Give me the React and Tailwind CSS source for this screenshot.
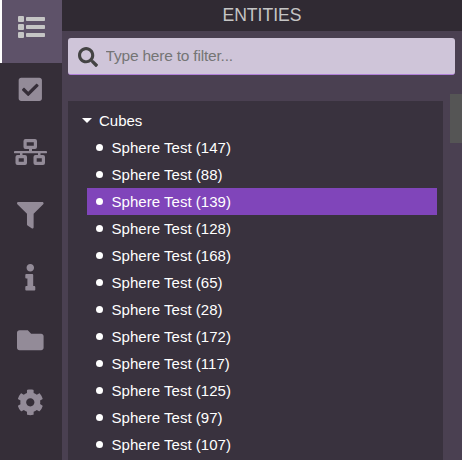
import {
  FaCheckSquare,
  FaFilter,
  FaInfo,
  FaFolder,
  FaCog,
  FaSearch,
} from "react-icons/fa";

const entities = [147, 88, 139, 128, 168, 65, 28, 172, 117, 125, 97, 107];
const selected = 139;

function ListIcon() {
  return (
    <svg viewBox="0 0 27 22" className="h-[22px] w-[27px]" fill="currentColor">
      {[0, 8, 16].map((y) => (
        <g key={y}>
          <rect x="0" y={y} width="6" height="6" rx="1" />
          <rect x="8" y={y + 1} width="19" height="4" rx="0.8" />
        </g>
      ))}
    </svg>
  );
}

function NetworkIcon() {
  return (
    <svg viewBox="0 0 33 26" className="h-[26px] w-[33px]" fill="currentColor">
      <g fill="none" stroke="currentColor" strokeWidth="3.2">
        <rect x="11.1" y="1.6" width="10.3" height="6.8" rx="0.4" />
        <rect x="3.1" y="17.6" width="8.3" height="6.8" rx="0.4" />
        <rect x="21.1" y="17.6" width="8.3" height="6.8" rx="0.4" />
      </g>
      <path d="M15 9h3v3h14a1 1 0 0 1 0 2.2h-5.5V17h-2.5v-2.8H8.5V17H6v-2.8H1A1 1 0 0 1 1 12h14z" />
    </svg>
  );
}

const tools = [
  { Icon: FaCheckSquare, pad: "pb-[10px]" },
  { Icon: NetworkIcon, pad: "pb-[10px]" },
  { Icon: FaFilter, pad: "pb-[8px]" },
  { Icon: FaInfo, pad: "pb-[8px]" },
  { Icon: FaFolder, pad: "pb-[8px]" },
  { Icon: FaCog, pad: "pb-[8px]" },
];

function Sidebar() {
  return (
    <nav className="flex w-[62px] shrink-0 flex-col bg-[#352e38] text-[26.6px] text-[#938b98]">
      <button className="flex h-[63px] shrink-0 items-center justify-center border-l-2 border-white bg-[#5e5269] pr-[1px] pb-[9px] text-[#c5c5c5]">
        <ListIcon />
      </button>
      {tools.map(({ Icon, pad }, i) => (
        <button key={i} className={`flex h-[62.5px] shrink-0 items-center justify-center pr-[1px] ${pad}`}>
          <Icon />
        </button>
      ))}
    </nav>
  );
}

function EntityTree() {
  return (
    <div className="h-[360px] w-[375px] shrink-0 overflow-hidden bg-[#39323e] pt-[6px] text-[15px] leading-[27px] text-white">
      <div className="flex h-[27px] items-center pl-[14px]">
        <span className="mr-[7px] border-x-5 border-t-5 border-x-transparent border-t-white" />
        Cubes
      </div>
      <ul className="mr-[6px] ml-[19px]">
        {entities.map((n) => (
          <li
            key={n}
            className={`flex h-[27px] items-center pl-[9px] ${n === selected ? "bg-[#8045ba]" : ""}`}
          >
            <span className="mr-[8.5px] size-[7px] rounded-full bg-white" />
            <span className="tracking-[0.03px]">Sphere Test ({n})</span>
          </li>
        ))}
      </ul>
    </div>
  );
}

export default function App() {
  return (
    <div className="flex h-[460px] w-[462px] overflow-hidden bg-[#4a4051] font-['Liberation_Sans',Arial,sans-serif]">
      <Sidebar />
      <main className="flex min-w-0 flex-1 flex-col">
        <h1 className="h-[31px] shrink-0 bg-[#302a33] text-center text-[17.6px] leading-[30px] text-[#c5c5c5]">
          ENTITIES
        </h1>
        <div className="mt-[7px] ml-[6px] flex h-[37px] w-[387px] shrink-0 items-center rounded-[3px] border-b border-[#b080d8] bg-[#cfc5d9] pl-[10px]">
          <FaSearch className="mt-[2px] size-[20px] text-[#444]" />
          <input
            className="ml-[7.5px] w-[300px] bg-transparent text-[15.5px] tracking-[-0.2px] text-[#757575] outline-none placeholder:text-[#757575]"
            placeholder="Type here to filter..."
          />
        </div>
        <div className="mt-[19px] ml-[6px] flex h-[366px] justify-between">
          <div className="pt-[7px]">
            <EntityTree />
          </div>
          <div className="h-[49px] w-[12px] bg-[#555555]" />
        </div>
      </main>
    </div>
  );
}
